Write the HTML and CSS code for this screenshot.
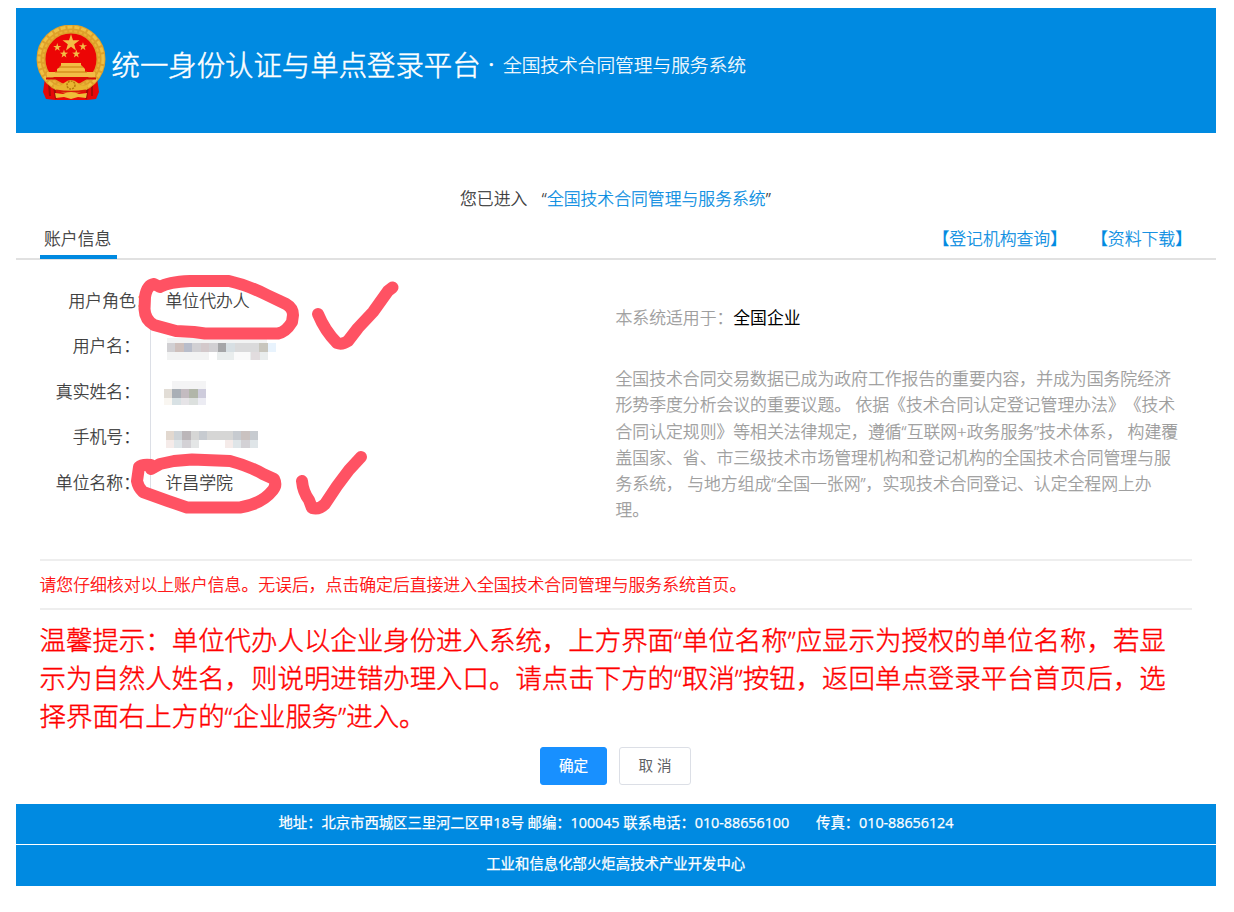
FILE: index.html
```html
<!DOCTYPE html>
<html lang="zh-CN">
<head>
<meta charset="utf-8">
<title>统一身份认证与单点登录平台</title>
<link rel="stylesheet" href="styles.css">
</head>
<body>
<div class="page">
  <header class="header">
    <svg class="emblem" viewBox="0 0 72 76">
      <path d="M10 53 L62 53 L64 67 L61 74 L52 75 L20 75 L11 74 L8 67Z" fill="#e60808"/>
      <path d="M14 58 L15 71 M19 61 L21 74 M57 58 L57 71 M53 61 L51 74" stroke="#a30d08" stroke-width="2"/>
      <circle cx="36" cy="34" r="30" fill="#ec0505" stroke="#dea02a" stroke-width="9"/>
      <circle cx="36" cy="34" r="32" fill="none" stroke="#efc043" stroke-width="3" stroke-dasharray="5 2"/>
      <circle cx="36" cy="34" r="28" fill="none" stroke="#ebb136" stroke-width="2" stroke-dasharray="3 2"/>
      <g fill="#f3bd45">
        <path id="star" d="M36 9 L38 15.200 L44.500 15.300 L39.200 19.200 L41 25.500 L36 21.700 L31 25.500 L32.800 19.200 L27.500 15.300 L34 15.200Z"/>
        <use href="#star" transform="translate(5 13.600) scale(.48)"/>
        <use href="#star" transform="translate(30.700 12.900) scale(.48)"/>
        <use href="#star" transform="translate(11.700 20.300) scale(.48)"/>
        <use href="#star" transform="translate(24 20.300) scale(.48)"/>
        <path d="M26 40 L26 38 L46 38 L46 40 L48 42 L50 44 L50 47 L60 47 L60 52 L12 52 L12 47 L22 47 L22 44 L25 42Z"/>
      </g>
      <path d="M24 42H48M20 47H52" stroke="#c97b0b"/>
      <path d="M11 53.500 H61" stroke="#d40c05" stroke-width="2"/>
      <path d="M18 59 Q26 63 29 58 Q36 52 43 58 Q46 63 54 59 L51 65 Q36 67 21 65Z" fill="#e9b52f"/>
      <circle cx="36" cy="60" r="4" fill="none" stroke="#b8770c" stroke-width="1.5" stroke-dasharray="2 1"/>
      <path d="M21 65.500 Q36 68 51 65.500" stroke="#d91a08" stroke-width="2" fill="none"/>
      <path d="M20 68 L28 69 Q36 65 44 69 L52 68 L51 73 L43 72 L36 74 L29 72 L21 73Z" fill="#f0bd38"/>
    </svg>
    <div class="brand">统一身份认证与单点登录平台</div>
    <div class="dot">·</div>
    <div class="system">全国技术合同管理与服务系统</div>
  </header>

  <div class="intro"><span>您已进入</span><span>“<a>全国技术合同管理与服务系统</a>”</span></div>

  <nav class="tabs">
    <div class="tab">账户信息</div>
    <div class="links"><a>【登记机构查询】</a><a>【资料下载】</a></div>
  </nav>

  <main class="info">
    <dl class="fields">
      <dt class="wide">用户角色：</dt><dd class="first">单位代办人</dd>
      <dt>用户名：</dt>
      <dd><svg class="mosaic" width="112" height="26" viewBox="0 0 112 26" shape-rendering="crispEdges">
        <path fill="#f2f3f3" d="M1 0H101V5H1ZM1 14H43V22H1Z"/><path fill="#e9eded" d="M51 14h51v8H51Z"/><path fill="#fafafa" d="M68 14h16v8H68Z"/>
        <path fill="#d1d0d3" d="M1 5h100v9H1Z"/><path fill="#cec0bc" d="M9 5h9v9H9Z"/><path fill="#b8bdca" d="M18 5h8v9h-8Z"/><path fill="#d3c9cb" d="M35 5h8v9h-8Z"/><path fill="#a5a6a8" d="M52 5h8v9h-8Z"/><path fill="#d7dfe3" d="M60 5h9v9h-9Z"/><path fill="#dadadb" d="M69 5h24v9H69Z"/><path fill="#c8c6bd" d="M93 5h9v9h-9Z"/><path fill="#e8f3fd" d="M102 5h8v9h-8Z"/><path fill="#e1dcde" d="M85 14h9v8h-9Z"/>
      </svg></dd>
      <dt>真实姓名：</dt>
      <dd><svg class="mosaic name" width="44" height="26" viewBox="0 0 44 26" shape-rendering="crispEdges">
        <path fill="#f4f4f5" d="M8 0h34v8H8Z"/><path fill="#e2ddd6" d="M0 8h8v9H0Z"/><path fill="#a9afb6" d="M8 8h9v9H8Z"/><path fill="#c3bbc0" d="M17 8h8v9h-8Z"/><path fill="#b1b6a9" d="M25 8h9v9h-9Z"/><path fill="#ceccdc" d="M34 8h8v9h-8Z"/><path fill="#f9f6f1" d="M0 17h8v7H0Z"/><path fill="#d8e1e4" d="M8 17h9v7H8Z"/><path fill="#e6e4e7" d="M17 17h8v7h-8Z"/><path fill="#dce0de" d="M25 17h9v7h-9Z"/><path fill="#ececf3" d="M34 17h8v7h-8Z"/>
      </svg></dd>
      <dt>手机号：</dt>
      <dd><svg class="mosaic phone" width="94" height="18" viewBox="0 0 94 18" shape-rendering="crispEdges">
        <path fill="#d6d6d5" d="M0 0h92v9H0Z"/><path fill="#e2d8cf" d="M0 0h8v9H0Z"/><path fill="#ced3d7" d="M8 0h8v9H8Z"/><path fill="#bbb6b9" d="M16 0h9v9h-9Z"/><path fill="#c7cbd0" d="M33 0h8v9h-8ZM67 0h8v9h-8ZM84 0h8v9h-8Z"/><path fill="#cac2c0" d="M75 0h9v9h-9Z"/><path fill="#f5ebe9" d="M0 9h8v8H0ZM59 9h8v8h-8Z"/><path fill="#dfe5e8" d="M8 9h8v8H8ZM67 9h8v8h-8ZM84 9h8v8h-8Z"/><path fill="#d3d1d5" d="M16 9h9v8h-9ZM75 9h9v8h-9Z"/><path fill="#e4e6e6" d="M25 9h8v8h-8Z"/>
      </svg></dd>
      <dt>单位名称：</dt><dd>许昌学院</dd>
    </dl>
    <section class="about">
      <div class="scope">本系统适用于：<strong>全国企业</strong></div>
      <p class="desc">
        <span>全国技术合同交易数据已成为政府工作报告的重要内容，并成为国务院经济</span>
        <span>形势季度分析会议的重要议题。 依据《技术合同认定登记管理办法》《技术</span>
        <span>合同认定规则》等相关法律规定，遵循“互联网+政务服务”技术体系， 构建覆</span>
        <span>盖国家、省、市三级技术市场管理机构和登记机构的全国技术合同管理与服</span>
        <span>务系统， 与地方组成“全国一张网”，实现技术合同登记、认定全程网上办</span>
        <span>理。</span>
      </p>
    </section>
  </main>

  <div class="check">请您仔细核对以上账户信息。无误后，点击确定后直接进入全国技术合同管理与服务系统首页。</div>
  <p class="tip">
    <span>温馨提示：单位代办人以企业身份进入系统，上方界面“单位名称”应显示为授权的单位名称，若显</span>
    <span>示为自然人姓名，则说明进错办理入口。请点击下方的“取消”按钮，返回单点登录平台首页后，选</span>
    <span>择界面右上方的“企业服务”进入。</span>
  </p>

  <div class="actions"><button class="btn primary">确定</button><button class="btn">取 消</button></div>

  <footer class="footer">
    <div class="contact"><span>地址：北京市西城区三里河二区甲18号 邮编：100045 联系电话：010-88656100</span><span>传真：010-88656124</span></div>
    <div class="owner">工业和信息化部火炬高技术产业开发中心</div>
  </footer>

  <svg class="marks" width="1234" height="912" viewBox="0 0 1234 912">
    <path d="M160 287 Q168 282 190 281 L229 281 Q247 285 267 295 L286 304 Q293 308 293 315 L292 322 Q286 332 278 333.500 L205 333.500 L194 332 L176 331 L154 325 Q145 320 144.500 309 L145 297 Q147 285 154 284 L160 287"/>
    <path d="M318 314 Q325 331 337 343 Q342 345 348 341 L358 328 L373 312 L388 291 L392.500 287.500"/>
    <path d="M151 469 L160 464 L174 461 L192 459.500 L230 461 Q249 466 263 474 L274 479 Q277 485 273 490 Q262 504 240 507.500 L187 507.500 L168 501 L143 492 Q138 487 137 481 L139 467 Q142 464 151 465"/>
    <path d="M302 481 Q303 492 309 500 L312 508 Q319 510 325 504 L337 486 L349 470 L361 457"/>
  </svg>
</div>
</body>
</html>
```
FILE: styles.css
```css
* { box-sizing: border-box; }
body {
  margin: 0;
  background: #fff;
  color: #333;
  font-family: "Open Sans", "Noto Sans CJK SC", sans-serif;
  font-size: 16.83px;
  font-weight: 300;
  line-height: 24px;
  text-spacing-trim: space-all;
  -webkit-text-stroke: .25px currentColor;
}
.page { position: relative; width: 1234px; height: 912px; padding: 7.5px 18px 0 15.5px; overflow: hidden; }
.header {
  display: flex;
  align-items: flex-start;
  height: 125.5px;
  padding: 17.5px 0 0 19px;
  background: #008ae1;
  color: #fff;
  white-space: nowrap;
}
.emblem { width: 72px; height: 76px; }
.brand { width: 369px; margin-left: 5px; font-size: 28.4px; line-height: 80px; -webkit-text-stroke-width: .5px; }
.dot { width: 22.5px; font-size: 20px; font-weight: 600; line-height: 80px; padding-left: 8px; }
.system { font-size: 18.7px; line-height: 80px; }
.intro { display: flex; gap: 14.5px; padding: 54px 0 0 444.5px; white-space: nowrap; }
a { color: #008ae1; }
.tabs {
  display: flex;
  justify-content: space-between;
  height: 49px;
  padding: 16px 24px 0;
  border-bottom: 2px solid #e1e1e1;
}
.tab { width: 77px; height: 32px; padding-left: 4.5px; border-bottom: 4px solid #008ae1; }
.links { display: flex; gap: 24px; }
.info { display: flex; height: 299px; }
.fields {
  display: grid;
  grid-template-columns: 134px 1fr;
  grid-auto-rows: 45.6px;
  width: 600px;
  margin: 0;
  padding-top: 17.5px;
  line-height: 45px;
}
.fields dt { padding-right: 9.5px; text-align: right; white-space: nowrap; }
.fields .wide { padding: 0 0 0 53px; text-align: left; }
.fields dd { height: 39px; margin: 0; border-left: 1px solid #dcdfe6; padding-left: 15px; }
.fields dd:not(:last-child) { height: auto; }
.fields .first { border-color: transparent; }
.mosaic { display: block; margin-top: 15px; }
.name { margin: 12px 0 0 -2px; }
.phone { margin: 17px 0 0 0; }
.about { color: #999; white-space: nowrap; }
.scope { padding-top: 46px; }
.scope strong { font-weight: 400; color: #000; -webkit-text-stroke-width: 0; }
.desc { margin: 36px 0 0; line-height: 26.3px; }
.desc span, .tip span { display: block; }
.check {
  height: 51px;
  margin: 0 24px;
  border: solid #eee;
  border-width: 2px 0;
  color: #f00;
  line-height: 48px;
  white-space: nowrap;
}
.tip {
  margin: 11px 24px 0;
  color: #f00;
  font-size: 26.45px;
  line-height: 38px;
  white-space: nowrap;
  -webkit-text-stroke-width: .4px;
}
.actions { display: flex; gap: 12px; margin-top: 11.5px; padding-left: 524.5px; }
.btn {
  width: 72px;
  height: 38.5px;
  padding: 0;
  border: 1px solid #dcdfe6;
  border-radius: 3px;
  background: #fff;
  color: #606266;
  font: 400 14.6px/35px "Open Sans", "Noto Sans CJK SC", sans-serif;
  -webkit-text-stroke-width: 0;
}
.primary { width: 67px; border-color: #1890ff; background: #1890ff; color: #fff; -webkit-text-stroke-width: .2px; }
.footer { margin-top: 18.5px; color: #fff; font-size: 14.4px; font-weight: 400; text-align: center; white-space: nowrap; }
.contact { display: flex; gap: 27px; height: 40px; padding-left: 263px; background: #008ae1; line-height: 38px; letter-spacing: -.07px; }
.owner { height: 41px; margin-top: 1px; background: #008ae1; line-height: 38px; }
.marks { position: absolute; left: 0; top: 0; fill: none; stroke: #ff5263; stroke-width: 12; stroke-linecap: round; stroke-linejoin: round; }
```
